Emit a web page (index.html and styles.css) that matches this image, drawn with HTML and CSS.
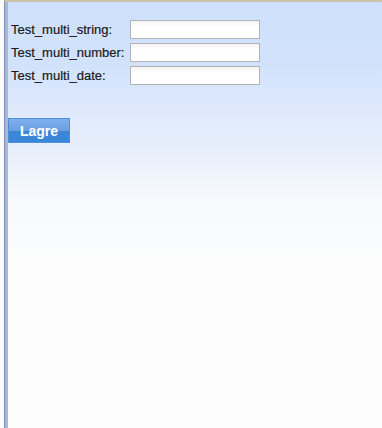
FILE: index.html
```
<!doctype html>
<html lang="no">
<head>
	<meta charset="UTF-8" />
	<title>Skjema</title>
	<link rel="stylesheet" href="styles.css">
</head>
<body>
	<div id="frame">
		<div id="panel">
			<table class="form">
				<tr><td class="lbl">Test_multi_string:</td><td><input type="text" class="field"></td></tr>
				<tr><td class="lbl">Test_multi_number:</td><td><input type="text" class="field"></td></tr>
				<tr><td class="lbl">Test_multi_date:</td><td><input type="text" class="field"></td></tr>
			</table>
			<button class="save">Lagre</button>
		</div>
	</div>
</body>
</html>
```
FILE: styles.css
```
html, body {margin:0;padding:0;height:100%;background:#fcfcfc;}
#frame {display:flex;height:428px;padding-left:4px;background:#fcfcfc;}
#panel {flex:1;border-left:1px solid #7d8fae;box-shadow:inset 3px 0 0 #a9bbd3;padding-left:3px;border-top:2px solid #cbc3aa;background:linear-gradient(to bottom,#cfe0fd 0px,#d2e2fc 60px,#e6eefc 140px,#f7f9fd 200px,#fcfcfc 260px);font-family:"Liberation Sans",Arial,sans-serif;font-size:13px;color:#1a1a1a;}
.form {border-collapse:separate;border-spacing:0 4px;margin:14px 0 0 3px;}
.form td {padding:0;}
.lbl {padding-right:6px !important;white-space:nowrap;-webkit-text-stroke:0.2px #1a1a1a;}
.field {width:126px;height:15px;margin:0;padding:1px;border:1px solid #b3b3b3;background:linear-gradient(to bottom,#f3f3f3,#ffffff 6px);font-family:"Liberation Sans",Arial,sans-serif;font-size:12px;}
.save {display:block;margin-top:29px;width:62px;height:25px;padding:0;border:1px solid #4e8fdc;background:linear-gradient(to bottom,#7fb0ec 0,#6a9fe2 50%,#3c86d8 51%,#3a86d8 100%);color:#fff;font-family:"Liberation Sans",Arial,sans-serif;font-weight:bold;font-size:14px;}
```
